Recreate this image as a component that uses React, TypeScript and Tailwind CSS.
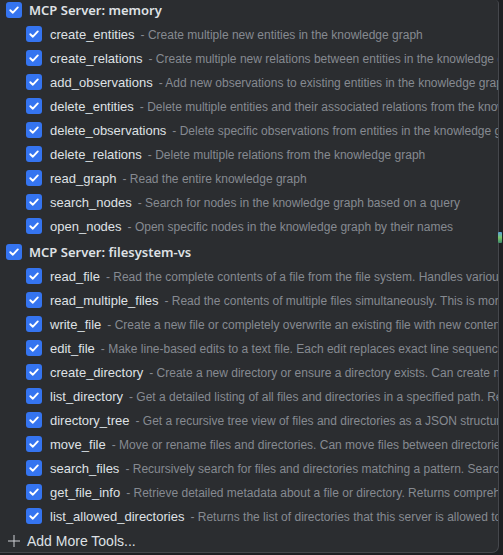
import React from "react";

const memory: [string, string][] = [
  ["create_entities", "Create multiple new entities in the knowledge graph"],
  ["create_relations", "Create multiple new relations between entities in the knowledge graph"],
  ["add_observations", "Add new observations to existing entities in the knowledge graph"],
  ["delete_entities", "Delete multiple entities and their associated relations from the knowledge graph"],
  ["delete_observations", "Delete specific observations from entities in the knowledge graph"],
  ["delete_relations", "Delete multiple relations from the knowledge graph"],
  ["read_graph", "Read the entire knowledge graph"],
  ["search_nodes", "Search for nodes in the knowledge graph based on a query"],
  ["open_nodes", "Open specific nodes in the knowledge graph by their names"],
];

const fs: [string, string][] = [
  ["read_file", "Read the complete contents of a file from the file system. Handles various text encodings"],
  ["read_multiple_files", "Read the contents of multiple files simultaneously. This is more efficient"],
  ["write_file", "Create a new file or completely overwrite an existing file with new content."],
  ["edit_file", "Make line-based edits to a text file. Each edit replaces exact line sequences"],
  ["create_directory", "Create a new directory or ensure a directory exists. Can create multiple"],
  ["list_directory", "Get a detailed listing of all files and directories in a specified path. Results"],
  ["directory_tree", "Get a recursive tree view of files and directories as a JSON structure."],
  ["move_file", "Move or rename files and directories. Can move files between directories"],
  ["search_files", "Recursively search for files and directories matching a pattern. Searches"],
  ["get_file_info", "Retrieve detailed metadata about a file or directory. Returns comprehensive"],
  ["list_allowed_directories", "Returns the list of directories that this server is allowed to access."],
];

function Check() {
  return (
    <span className="w-4 h-4 shrink-0 rounded-[3px] bg-[#3574f0] flex items-center justify-center">
      <svg width="12" height="12" viewBox="0 0 12 12" fill="none">
        <path d="M2.3 6.2 L4.9 8.7 L9.8 3.4" stroke="white" strokeWidth="1.9" strokeLinecap="round" strokeLinejoin="round" />
      </svg>
    </span>
  );
}

function Header({ title }: { title: string }) {
  return (
    <div className="h-6 flex items-center pl-[6px] gap-[7px] whitespace-nowrap">
      <Check />
      <span
        className="font-semibold text-[13px] text-[#dfe1e5] mt-[1px]"
        style={{ fontFamily: '"Noto Sans", "Liberation Sans", sans-serif' }}
      >
        {title}
      </span>
    </div>
  );
}

function Row({ name, desc }: { name: string; desc: string }) {
  return (
    <div className="h-6 flex items-center pl-[26px] gap-2 whitespace-nowrap overflow-hidden">
      <Check />
      <span className="text-[13px] text-[#dfe1e5] mt-[2px]">{name}</span>
      <span className="text-[12px] text-[#868a91] -ml-[2px] mt-[2px]">- {desc}</span>
    </div>
  );
}

export default function App() {
  return (
    <div
      className="w-[503px] h-[555px] bg-[#1e1f22] relative overflow-hidden"
      style={{ fontFamily: '"Liberation Sans", Arial, sans-serif' }}
    >
      <div className="absolute left-[498px] top-[232px] w-[4px] h-[11px] bg-gradient-to-b from-[#5aa0d8] via-[#7bc46a] to-[#3c8d6a] rounded-[1px]" />
      <div className="w-[499px] h-[553px] bg-[#2b2d30] border-r border-b border-[#45474c] rounded-br-[7px] rounded-tr-[4px] overflow-hidden flex flex-col">
        <div className="-mt-[2px]">
          <Header title="MCP Server: memory" />
          {memory.map(([n, d]) => (
            <Row key={n} name={n} desc={d} />
          ))}
        </div>
        <div className="h-px bg-[#393b40] mt-[1px] mr-[2px]" />
        <div className="mt-[1px]">
          <Header title="MCP Server: filesystem-vs" />
          {fs.map(([n, d]) => (
            <Row key={n} name={n} desc={d} />
          ))}
        </div>
        <div className="h-px bg-[#393b40] mt-[1px] mr-[2px]" />
        <div className="h-6 flex items-center pl-[8px] gap-[7px] whitespace-nowrap">
          <svg width="12" height="12" viewBox="0 0 12 12" className="mt-[1px]">
            <path d="M6 0 V12 M0 6 H12" stroke="#cfd1d5" strokeWidth="1" />
          </svg>
          <span className="text-[14px] text-[#dfe1e5] mt-[2px]">Add More Tools...</span>
        </div>
      </div>
    </div>
  );
}
